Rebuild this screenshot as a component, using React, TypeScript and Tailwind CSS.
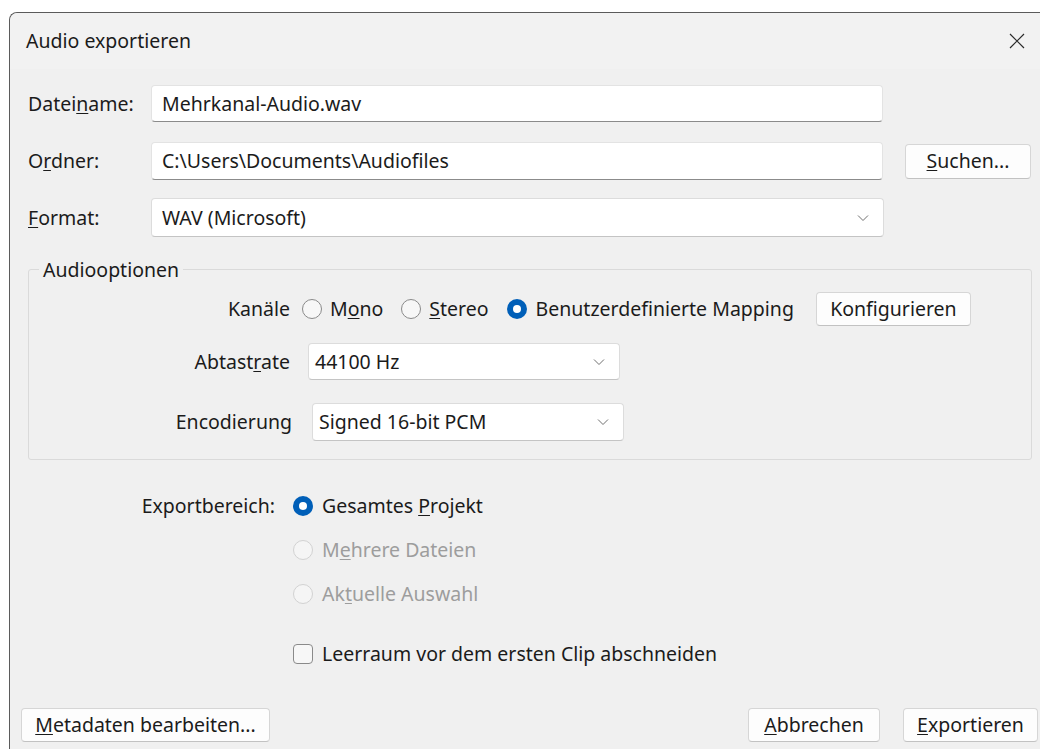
import React from "react";

const font = { fontFamily: '"Noto Sans", "Open Sans", sans-serif' };

const Chevron = () => (
  <svg width="12" height="8" viewBox="0 0 12 8" className="shrink-0">
    <path d="M1 1.5 L6 6.5 L11 1.5" fill="none" stroke="#707070" strokeWidth="1" />
  </svg>
);

const Radio = ({ checked = false, disabled = false }: { checked?: boolean; disabled?: boolean }) =>
  checked ? (
    <span className="w-[20px] h-[20px] rounded-full bg-[#005fb8] flex items-center justify-center shrink-0">
      <span className="w-[8px] h-[8px] rounded-full bg-white" />
    </span>
  ) : (
    <span
      className={
        disabled
          ? "w-[20px] h-[20px] rounded-full border border-[#d2d2d2] bg-[#f5f5f5] shrink-0"
          : "w-[20px] h-[20px] rounded-full border border-[#8a8a8a] bg-[#f7f7f7] shrink-0"
      }
    />
  );

const Button = ({ children, className = "" }: { children: React.ReactNode; className?: string }) => (
  <button
    className={
      "h-[34px] rounded-[4px] border border-[#d6d6d6] border-b-[#c2c2c2] bg-[#fdfdfd] text-[#1b1b1b] flex items-center justify-center " +
      className
    }
  >
    {children}
  </button>
);

const TextBox = ({ value, className = "" }: { value: string; className?: string }) => (
  <div
    className={
      "rounded-[4px] border border-[#e3e3e3] border-b-[#8b8b8b] bg-white flex items-center pl-[10px] text-[#1b1b1b] " +
      className
    }
  >
    {value}
  </div>
);

const Combo = ({ value, className = "", pl = "pl-[10px]" }: { value: string; className?: string; pl?: string }) => (
  <div
    className={
      "rounded-[4px] border border-[#dcdcdc] border-b-[#c4c4c4] bg-white flex items-center justify-between pr-[14px] text-[#1b1b1b] " +
      pl +
      " " +
      className
    }
  >
    <span>{value}</span>
    <Chevron />
  </div>
);

export default function App() {
  return (
    <div className="w-[1040px] h-[749px] overflow-hidden bg-white" style={font}>
      <div className="ml-[9px] mt-[12px] w-[1040px] h-[745px] border-l border-t border-[#5b5b5b] rounded-tl-[8px] bg-[#f0f0f0] text-[19.5px] text-[#1b1b1b] leading-none">
        {/* title bar */}
        <div className="h-[56px] flex items-center justify-between pl-[16px] pr-[20px] bg-[#f2f2f2] rounded-tl-[8px]">
          <span>Audio exportieren</span>
          <svg width="16" height="16" viewBox="0 0 16 16" className="mr-[4px]">
            <path d="M1 1 L15 15 M15 1 L1 15" stroke="#2b2b2b" strokeWidth="1.2" />
          </svg>
        </div>

        {/* file fields */}
        <div className="pl-[18px]">
          <div className="flex items-center mt-[16px]">
            <span className="w-[123px]">
              Datei<u className="underline-offset-2">n</u>ame:
            </span>
            <TextBox value="Mehrkanal-Audio.wav" className="w-[732px] h-[37px]" />
          </div>
          <div className="flex items-center mt-[20px]">
            <span className="w-[123px]">
              O<u className="underline-offset-2">r</u>dner:
            </span>
            <TextBox value="C:\Users\Documents\Audiofiles" className="w-[732px] h-[38px]" />
            <Button className="ml-[22px] w-[126px] h-[35px]">
              <span>
                <u className="underline-offset-2">S</u>uchen...
              </span>
            </Button>
          </div>
          <div className="flex items-center mt-[18px]">
            <span className="w-[123px]">
              <u className="underline-offset-2">F</u>ormat:
            </span>
            <Combo value="WAV (Microsoft)" className="w-[733px] h-[39px]" />
          </div>

          {/* audio options group */}
          <div className="relative mt-[32px] w-[1004px] h-[191px] border border-[#dadada] rounded-[3px] pt-[22px]">
            <span className="absolute left-[10px] top-[-10px] px-[4px] bg-[#f0f0f0]">Audiooptionen</span>
            <div className="flex items-center h-[34px]">
              <span className="w-[261px] text-right">Kanäle</span>
              <span className="ml-[12px] flex items-center gap-[8px]">
                <Radio />
                <span>
                  M<u className="underline-offset-2">o</u>no
                </span>
              </span>
              <span className="ml-[18px] flex items-center gap-[8px]">
                <Radio />
                <span>
                  <u className="underline-offset-2">S</u>tereo
                </span>
              </span>
              <span className="ml-[18px] flex items-center gap-[9px]">
                <Radio checked />
                <span>
                  Benutzerdefinierte Mappin<u className="underline-offset-2">g</u>
                </span>
              </span>
              <Button className="ml-[22px] w-[155px]">Konfigurieren</Button>
            </div>
            <div className="flex items-center mt-[17px]">
              <span className="w-[261px] text-right">
                Abtast<u className="underline-offset-2">r</u>ate
              </span>
              <Combo value="44100 Hz" pl="pl-[6px]" className="ml-[18px] w-[312px] h-[37px]" />
            </div>
            <div className="flex items-center mt-[23px]">
              <span className="w-[263px] text-right">Encodierung</span>
              <Combo value="Signed 16-bit PCM" pl="pl-[6px]" className="ml-[20px] w-[312px] h-[38px]" />
            </div>
          </div>

          {/* export range */}
          <div className="flex items-center h-[24px] mt-[34px]">
            <span className="w-[247px] text-right">Exportbereich:</span>
            <span className="ml-[18px] flex items-center gap-[9px]">
              <Radio checked />
              <span>
                Gesamtes <u className="underline-offset-2">P</u>rojekt
              </span>
            </span>
          </div>
          <div className="flex items-center h-[24px] mt-[20px] pl-[265px] gap-[9px] text-[#9d9d9d]">
            <Radio disabled />
            <span>
              M<u className="underline-offset-2">e</u>hrere Dateien
            </span>
          </div>
          <div className="flex items-center h-[24px] mt-[20px] pl-[265px] gap-[9px] text-[#9d9d9d]">
            <Radio disabled />
            <span>
              Ak<u className="underline-offset-2">t</u>uelle Auswahl
            </span>
          </div>
          <div className="flex items-center h-[24px] mt-[36px] pl-[265px] gap-[9px]">
            <span className="w-[20px] h-[20px] rounded-[4px] border border-[#8a8a8a] bg-[#f7f7f7] shrink-0" />
            <span>Leerraum vor dem ersten Clip abschneiden</span>
          </div>
        </div>

        {/* dialog buttons */}
        <div className="flex items-center mt-[42px] pl-[11px]">
          <Button className="w-[249px]">
            <span>
              <u className="underline-offset-2">M</u>etadaten bearbeiten...
            </span>
          </Button>
          <Button className="ml-[478px] w-[132px]">
            <span>
              <u className="underline-offset-2">A</u>bbrechen
            </span>
          </Button>
          <Button className="ml-[23px] w-[135px] border-[#3d6f99] border-b-[#3d6f99]">
            <span>
              <u className="underline-offset-2">E</u>xportieren
            </span>
          </Button>
        </div>
      </div>
    </div>
  );
}
